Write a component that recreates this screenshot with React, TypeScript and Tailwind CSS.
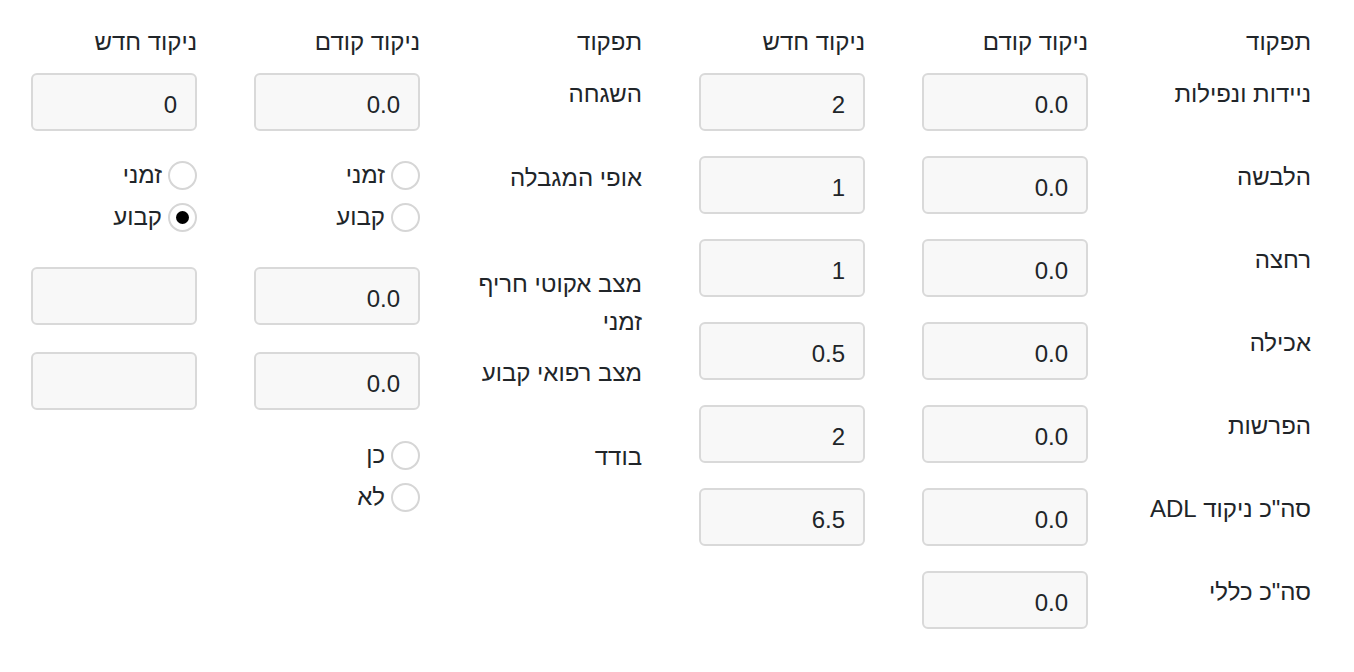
import React from 'react';

const font = { fontFamily: '"Liberation Sans", "DejaVu Sans", sans-serif' };

function Field({ value }: { value?: string }) {
  return (
    <input
      readOnly
      value={value ?? ''}
      className="w-[166px] h-[58px] rounded-[6px] border-2 border-[#d9d9d9] bg-[#f8f8f8] pr-[18px] pl-3 pt-[5px] text-right text-[24px] text-[#212529] outline-none"
    />
  );
}

function Radio({ label, checked }: { label: string; checked?: boolean }) {
  return (
    <label className="flex h-[42px] items-center gap-[6px]">
      <span className="flex h-[29px] w-[29px] items-center justify-center rounded-full border-2 border-[#d6d6d6] bg-white">
        {checked && <span className="h-[13px] w-[13px] rounded-full bg-black" />}
      </span>
      <span className="leading-[38px]">{label}</span>
    </label>
  );
}

function Header({ cols }: { cols: string }) {
  return (
    <div className={`grid h-[49px] leading-[36px] ${cols}`}>
      <div>תפקוד</div>
      <div>ניקוד קודם</div>
      <div>ניקוד חדש</div>
    </div>
  );
}

function Row({
  cols,
  label,
  prev,
  next,
  last,
}: {
  cols: string;
  label: string;
  prev: string;
  next?: string | null;
  last?: boolean;
}) {
  return (
    <div className={`grid h-[58px] ${cols} ${last ? '' : 'mb-[25px]'}`}>
      <div className="pt-[2px] leading-[38px]">{label}</div>
      <div>
        <Field value={prev} />
      </div>
      <div>{next !== null && <Field value={next} />}</div>
    </div>
  );
}

const adl = [
  { label: 'ניידות ונפילות', prev: '0.0', next: '2' },
  { label: 'הלבשה', prev: '0.0', next: '1' },
  { label: 'רחצה', prev: '0.0', next: '1' },
  { label: 'אכילה', prev: '0.0', next: '0.5' },
  { label: 'הפרשות', prev: '0.0', next: '2' },
  { label: 'סה"כ ניקוד ADL', prev: '0.0', next: '6.5' },
];

const rightCols = 'grid-cols-[223px_223px_1fr]';
const leftCols = 'grid-cols-[222px_223px_1fr]';

export default function App() {
  return (
    <div
      dir="rtl"
      style={font}
      className="flex min-h-screen bg-white pr-[43px] pt-[24px] text-[24px] text-[#212529]"
    >
      {/* ADL */}
      <section className="w-[669px] shrink-0">
        <Header cols={rightCols} />
        {adl.map((r) => (
          <Row key={r.label} cols={rightCols} label={r.label} prev={r.prev} next={r.next} />
        ))}
        <Row cols={rightCols} label='סה"כ כללי' prev="0.0" next={null} last />
      </section>

      {/* סיעודי */}
      <section className="w-[642px] shrink-0">
        <Header cols={leftCols} />
        <Row cols={leftCols} label="השגחה" prev="0.0" next="0" />

        <div className={`grid h-[111px] ${leftCols}`}>
          <div className="leading-[38px] pt-[3px]">אופי המגבלה</div>
          <div className="-mt-[2px]">
            <Radio label="זמני" />
            <Radio label="קבוע" />
          </div>
          <div className="-mt-[2px]">
            <Radio label="זמני" />
            <Radio label="קבוע" checked />
          </div>
        </div>

        <div className={`grid h-[58px] mb-[27px] ${leftCols}`}>
          <div className="w-[170px] leading-[38px] -mt-[2px]">מצב אקוטי חריף זמני</div>
          <div>
            <Field value="0.0" />
          </div>
          <div>
            <Field />
          </div>
        </div>

        <div className={`grid h-[58px] mb-[24px] ${leftCols}`}>
          <div className="leading-[38px] pt-[2px]">מצב רפואי קבוע</div>
          <div>
            <Field value="0.0" />
          </div>
          <div>
            <Field />
          </div>
        </div>

        <div className={`grid ${leftCols}`}>
          <div className="leading-[38px] pt-[4px]">בודד</div>
          <div>
            <Radio label="כן" />
            <Radio label="לא" />
          </div>
          <div />
        </div>
      </section>
    </div>
  );
}
